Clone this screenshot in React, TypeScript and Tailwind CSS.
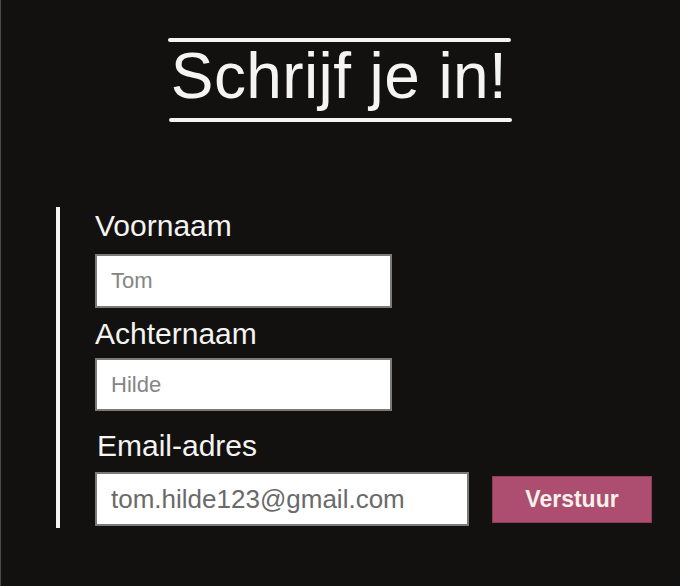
export default function App() {
  return (
    <div className="w-[680px] h-[586px] bg-[#121110] border-l border-[#4a4a48] font-['Liberation_Sans',Arial,sans-serif] text-[#f4f4f2] overflow-hidden">
      {/* titel */}
      <div className="flex flex-col items-center pt-[38px]">
        <div className="w-[343px] h-[4px] rounded-full bg-[#f4f4f2] mr-[2px]"></div>
        <h1 className="mt-[2px] text-[64px] leading-[64px] tracking-[0.4px] mr-[3px]">Schrijf je in!</h1>
        <div className="mt-[10px] w-[343px] h-[4px] rounded-full bg-[#f4f4f2]"></div>
      </div>

      {/* formulier */}
      <div className="mt-[85px] ml-[55px] border-l-4 border-[#f4f4f2] pl-[35px] pt-[4px] pb-[2px]">
        <form action="" className="flex flex-col">
          <label className="text-[30px] leading-[30px]">Voornaam</label>
          <input
            className="mt-[13px] w-[297px] h-[54px] bg-white border-2 border-[#7a7a7a] pl-[14px] text-[22px] placeholder:text-[#858585] outline-none"
            placeholder="Tom"
          />

          <label className="mt-[11px] text-[30px] leading-[30px]">Achternaam</label>
          <input
            className="mt-[9px] w-[297px] h-[53px] bg-white border-2 border-[#7a7a7a] pl-[14px] text-[22px] placeholder:text-[#858585] outline-none"
            placeholder="Hilde"
          />

          <label className="mt-[20px] ml-[2px] text-[30px] leading-[30px]">Email-adres</label>
          <div className="mt-[11px] flex items-center">
            <input
              className="w-[374px] h-[54px] bg-white border-2 border-[#7a7a7a] pl-[14px] text-[26px] text-[#6a6a6a] outline-none"
              defaultValue="tom.hilde123@gmail.com"
            />
            <button
              type="button"
              className="ml-[23px] mt-[1px] w-[160px] h-[47px] bg-[#ad4e70] border border-[#8e3d5a] text-[23px] font-bold text-[#f6f1ea]"
            >
              Verstuur
            </button>
          </div>
        </form>
      </div>
    </div>
  );
}
